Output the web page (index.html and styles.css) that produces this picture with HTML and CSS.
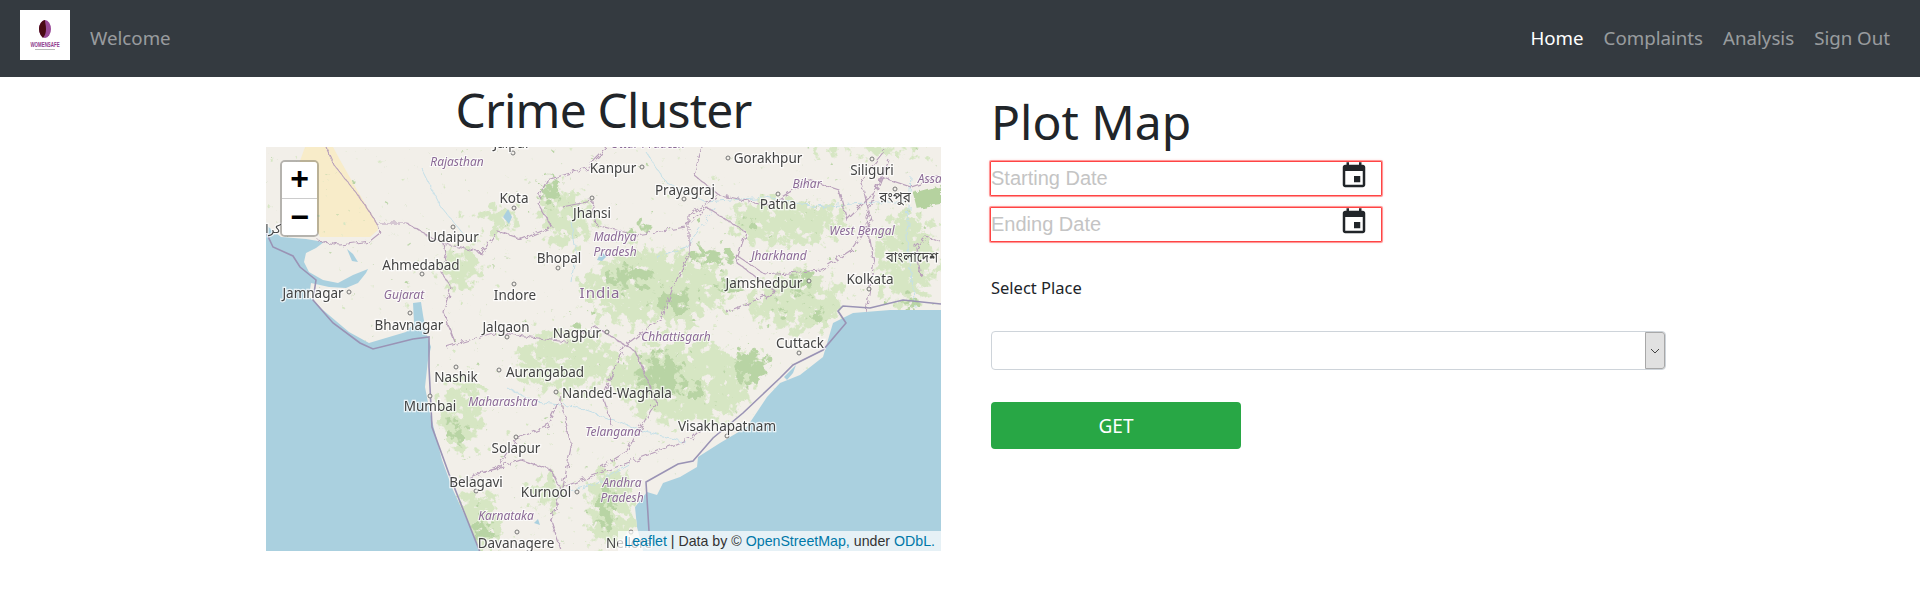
FILE: index.html
```html
<!DOCTYPE html>
<html>
  <head>
    <title>Crime Cluster</title>
    <meta charset="utf-8" />
    <link rel="stylesheet" href="styles.css">
  </head>
  <body>
    <nav class="navbar">
      <div class="brand">
        <div class="logo">
          <svg width="50" height="50" viewBox="0 0 50 50">
            <ellipse cx="25" cy="19" rx="6" ry="9" fill="#9a4a98" />
            <path d="M25 10c-4 1-6 5-6 9s2 7 4 9c2-3 3-5 3-9s-1-6-1-9z" fill="#4a0a14" />
            <text class="logo-text" transform="translate(25 37) scale(0.68 1)">WOMENSAFE</text>
            <rect x="15" y="39" width="20" height="1" fill="#bbb" />
          </svg>
        </div>
        <a class="nav-link" href="#">Welcome</a>
      </div>
      <div class="nav-menu">
        <a class="nav-link active" href="#">Home</a>
        <a class="nav-link" href="#">Complaints</a>
        <a class="nav-link" href="#">Analysis</a>
        <a class="nav-link" href="#">Sign Out</a>
      </div>
    </nav>

    <div class="content">
      <div class="map-col">
        <h1 class="map-title">Crime Cluster</h1>
        <div class="map">
          <svg class="map-tiles" width="675" height="404" viewBox="0 0 675 404">
            <defs>
              <clipPath id="landClip">
                <path d="M0 0H675V163L624 163 587 166 567 176 562 193 557 210 534 228 514 236 501 250 481 280 454 296 432 310 431 320 414 330 397 336 391 348 381 345 369 360 371 380 377 404H214L201 373 187 343 176 313 164 266 159 240 162 213 165 200 160 185 157 168 155 155 147 156 148 176 140 185 103 196 83 185 57 163 43 150 45 136 63 140 80 141 92 136 100 126 102 122 87 128 72 136 57 133 43 125 38 115 40 106 50 101 58 95 40 92 15 90 0 78Z" />
              </clipPath>
              <filter id="forestPale" filterUnits="userSpaceOnUse" x="0" y="0" width="675" height="404" color-interpolation-filters="sRGB">
                <feGaussianBlur in="SourceAlpha" stdDeviation="9" result="density" />
                <feTurbulence type="fractalNoise" baseFrequency="0.11" numOctaves="4" seed="3" />
                <feColorMatrix type="matrix" values="0 0 0 0 0  0 0 0 0 0  0 0 0 0 0  1 0 0 0 0" result="noise" />
                <feComposite in="noise" in2="density" operator="arithmetic" k1="0" k2="1" k3="0.5" k4="0" />
                <feComponentTransfer result="mask">
                  <feFuncA type="linear" slope="10" intercept="-7.7" />
                </feComponentTransfer>
                <feFlood flood-color="#d6e6c3" />
                <feComposite in2="mask" operator="in" />
                <feGaussianBlur stdDeviation="0.5" />
              </filter>
              <filter id="forestDeep" filterUnits="userSpaceOnUse" x="0" y="0" width="675" height="404" color-interpolation-filters="sRGB">
                <feGaussianBlur in="SourceAlpha" stdDeviation="6" result="density" />
                <feTurbulence type="fractalNoise" baseFrequency="0.13" numOctaves="4" seed="11" />
                <feColorMatrix type="matrix" values="0 0 0 0 0  0 0 0 0 0  0 0 0 0 0  1 0 0 0 0" result="noise" />
                <feComposite in="noise" in2="density" operator="arithmetic" k1="0" k2="1" k3="0.5" k4="0" />
                <feComponentTransfer result="mask">
                  <feFuncA type="linear" slope="10" intercept="-7.9" />
                </feComponentTransfer>
                <feFlood flood-color="#b8d4a4" />
                <feComposite in2="mask" operator="in" />
                <feGaussianBlur stdDeviation="0.5" />
              </filter>
              <filter id="wobble" x="-5%" y="-5%" width="110%" height="110%">
                <feTurbulence type="fractalNoise" baseFrequency="0.16" numOctaves="3" seed="9" />
                <feDisplacementMap in="SourceGraphic" scale="7" />
              </filter>
            </defs>

            <rect width="675" height="404" class="water" />
            <path class="land" d="M0 0H675V163L624 163 587 166 567 176 562 193 557 210 534 228 514 236 501 250 481 280 454 296 432 310 431 320 414 330 397 336 391 348 381 345 369 360 371 380 377 404H214L201 373 187 343 176 313 164 266 159 240 162 213 165 200 160 185 157 168 155 155 147 156 148 176 140 185 103 196 83 185 57 163 43 150 45 136 63 140 80 141 92 136 100 126 102 122 87 128 72 136 57 133 43 125 38 115 40 106 50 101 58 95 40 92 15 90 0 78Z" />
            <path class="desert" d="M39 0H67L74 13 91 43 111 76 112 83 104 90 54 90 40 60 30 25Z" />

            <g clip-path="url(#landClip)">
              <g filter="url(#forestPale)">
                <ellipse cx="232" cy="72" rx="18" ry="18" />
                <ellipse cx="195" cy="120" rx="26" ry="24" />
                <ellipse cx="300" cy="215" rx="55" ry="32" />
                <ellipse cx="195" cy="265" rx="24" ry="42" />
                <ellipse cx="390" cy="140" rx="75" ry="40" />
                <ellipse cx="420" cy="235" rx="70" ry="45" />
                <ellipse cx="520" cy="75" rx="65" ry="24" />
                <ellipse cx="530" cy="155" rx="50" ry="30" />
                <ellipse cx="212" cy="375" rx="24" ry="35" />
                <ellipse cx="345" cy="360" rx="26" ry="45" />
                <ellipse cx="640" cy="110" rx="32" ry="50" />
                <ellipse cx="610" cy="2" rx="70" ry="8" />
                <ellipse cx="300" cy="70" rx="30" ry="30" />
                <ellipse cx="280" cy="345" rx="16" ry="20" />
              </g>
              <g filter="url(#forestDeep)">
                <ellipse cx="285" cy="45" rx="12" ry="16" />
                <ellipse cx="372" cy="82" rx="20" ry="6" transform="rotate(-20 372 82)" />
                <ellipse cx="365" cy="130" rx="26" ry="12" />
                <ellipse cx="410" cy="155" rx="22" ry="12" />
                <ellipse cx="445" cy="110" rx="30" ry="9" />
                <ellipse cx="465" cy="140" rx="14" ry="9" />
                <ellipse cx="535" cy="135" rx="14" ry="14" />
                <ellipse cx="480" cy="75" rx="9" ry="7" />
                <ellipse cx="552" cy="168" rx="9" ry="11" />
                <ellipse cx="395" cy="230" rx="24" ry="25" />
                <ellipse cx="484" cy="220" rx="18" ry="20" />
                <ellipse cx="315" cy="180" rx="16" ry="5" />
                <ellipse cx="190" cy="285" rx="8" ry="18" />
                <ellipse cx="216" cy="382" rx="9" ry="18" />
                <ellipse cx="340" cy="360" rx="9" ry="30" />
                <ellipse cx="105" cy="187" rx="9" ry="4" />
                <ellipse cx="645" cy="155" rx="10" ry="10" />
                <ellipse cx="545" cy="62" rx="7" ry="5" />
                <ellipse cx="580" cy="65" rx="7" ry="6" />
                <ellipse cx="515" cy="160" rx="9" ry="8" />
                <ellipse cx="430" cy="245" rx="12" ry="10" />
              </g>
            </g>
            <path class="forest-solid" d="M647 46l28 -8v20l-24 4z" filter="url(#wobble)" />

            <g class="rivers" filter="url(#wobble)">
              <path d="M380 5l20 30 40 20 60 -5 50 10 60 -5 30 0" />
              <path d="M305 75l5 30 -5 30M155 20l20 40 25 30" />
              <path d="M645 30l-4 60 8 70M300 345l30 -8 35 -20" />
              <path d="M240 240l30 15 40 5 70 25 40 10" />
              <path d="M450 60l-30 40 -30 10" />
            </g>
            <g class="waterbody">
              <path d="M81 102l6 5 5 8 -6 -1z" />
              <path d="M237 70l5 -8 4 8 -3 7z" />
              <path d="M335 105l-4 8 5 1 5 -5z" />
              <path d="M518 230l12 -12 -3 8 -6 7z" />
              <path d="M272 372l-4 4 6 2z" />
            </g>

            <g class="borders" filter="url(#wobble)">
              <path d="M60 0l8 18 24 30 20 30 2 8 -10 8 -30 4 -22 -4" />
              <path d="M113 76l28 0 16 10 20 10 3 14 -5 15 10 15 -8 25 12 30" />
              <path d="M176 96l40 10 15 -22 25 8 30 -12 -15 -25 10 -22 40 -12 20 -20" />
              <path d="M296 60l30 -6 4 24 40 10 50 -8 20 -20 40 25 -10 30 40 30 -50 20" />
              <path d="M436 0l-8 28 25 20 -30 20 0 40 -16 32 -10 30 -40 30 -20 50 10 30" />
              <path d="M453 48l50 10 40 -25 30 10 8 30 30 -30 12 -30" />
              <path d="M470 108l30 20 55 -5 30 -20 20 -30 -10 -40 24 -30" />
              <path d="M180 200l50 -15 70 10 30 -15 40 25 20 50 -30 50 -25 15" />
              <path d="M295 250l-15 30 -30 12 -20 30 -20 5" />
              <path d="M295 250l10 50 -8 40 40 -15 40 -15 50 -20 10 -10" />
              <path d="M195 335l30 -12 30 -10 30 10 10 20 -10 30 10 30" />
              <path d="M600 165l8 -50 -8 -45 15 -40 30 10 30 -10" />
              <path d="M655 130l-5 -30 10 -10 15 5" />
            </g>
            <g class="coast-line">
              <path d="M0 85l7 15 20 9 7 11 16 13 -3 20 20 23 27 20 13 6 40 -10 16 -2 0 30 3 60 17 47 33 83" />
              <path d="M675 157l-38 -4 -33 8 -27 -2 -5 5 8 12 -23 27 -30 15 -13 13 -37 35 -30 25 -20 23 -15 3 -32 18 3 49" />
            </g>

            <g class="dots">
              <circle cx="247" cy="6" r="2" />
              <circle cx="376" cy="20" r="2" />
              <circle cx="248" cy="61" r="2" />
              <circle cx="326" cy="51" r="2" />
              <circle cx="187" cy="80" r="2" />
              <circle cx="156" cy="127" r="2" />
              <circle cx="292" cy="121" r="2" />
              <circle cx="248" cy="137" r="2" />
              <circle cx="83" cy="145" r="2" />
              <circle cx="144" cy="166" r="2" />
              <circle cx="462" cy="11" r="2" />
              <circle cx="418" cy="52" r="2" />
              <circle cx="512" cy="47" r="2" />
              <circle cx="606" cy="12" r="2" />
              <circle cx="629" cy="42" r="2" />
              <circle cx="603" cy="142" r="2" />
              <circle cx="543" cy="134" r="2" />
              <circle cx="241" cy="190" r="2" />
              <circle cx="341" cy="185" r="2" />
              <circle cx="190" cy="220" r="2" />
              <circle cx="233" cy="223" r="2" />
              <circle cx="290" cy="245" r="2" />
              <circle cx="164" cy="249" r="2" />
              <circle cx="250" cy="290" r="2" />
              <circle cx="210" cy="344" r="2" />
              <circle cx="311" cy="345" r="2" />
              <circle cx="251" cy="385" r="2" />
              <circle cx="533" cy="206" r="2" />
              <circle cx="461" cy="289" r="2" />
              <circle cx="365" cy="385" r="2" />
            </g>

            <g class="cities">
              <text x="246" y="1">Jaipur</text>
              <text x="347" y="26">Kanpur</text>
              <text x="248" y="56">Kota</text>
              <text x="326" y="71">Jhansi</text>
              <text x="187" y="95">Udaipur</text>
              <text x="155" y="123">Ahmedabad</text>
              <text x="293" y="116">Bhopal</text>
              <text x="249" y="153">Indore</text>
              <text x="47" y="151">Jamnagar</text>
              <text x="143" y="183">Bhavnagar</text>
              <text x="502" y="16">Gorakhpur</text>
              <text x="419" y="48">Prayagraj</text>
              <text x="512" y="62">Patna</text>
              <text x="606" y="28">Siliguri</text>
              <text x="604" y="137">Kolkata</text>
              <text x="498" y="141">Jamshedpur</text>
              <text x="240" y="185">Jalgaon</text>
              <text x="311" y="191">Nagpur</text>
              <text x="190" y="235">Nashik</text>
              <text x="279" y="230">Aurangabad</text>
              <text x="351" y="251">Nanded-Waghala</text>
              <text x="164" y="264">Mumbai</text>
              <text x="250" y="306">Solapur</text>
              <text x="210" y="340">Belagavi</text>
              <text x="280" y="350">Kurnool</text>
              <text x="250" y="401">Davanagere</text>
              <text x="534" y="201">Cuttack</text>
              <text x="461" y="284">Visakhapatnam</text>
              <text x="363" y="401">Nellore</text>
              <text x="629" y="55">রংপুর</text>
              <text x="646" y="115">বাংলাদেশ</text>
              <text x="7" y="86" class="urdu">کرا</text>
            </g>
            <g class="states">
              <text x="191" y="19">Rajasthan</text>
              <text x="382" y="1">Uttar Pradesh</text>
              <text x="349" y="94">Madhya</text>
              <text x="349" y="109">Pradesh</text>
              <text x="138" y="152">Gujarat</text>
              <text x="541" y="41">Bihar</text>
              <text x="669" y="36">Assam</text>
              <text x="596" y="88">West Bengal</text>
              <text x="513" y="113">Jharkhand</text>
              <text x="410" y="194">Chhattisgarh</text>
              <text x="237" y="259">Maharashtra</text>
              <text x="347" y="289">Telangana</text>
              <text x="356" y="340">Andhra</text>
              <text x="356" y="355">Pradesh</text>
              <text x="240" y="373">Karnataka</text>
              <text x="334" y="151" class="country">India</text>
            </g>
          </svg>

          <div class="zoom-control">
            <a class="zoom-btn" href="#">+</a>
            <a class="zoom-btn" href="#">&minus;</a>
          </div>
          <div class="attribution">
            <a href="#">Leaflet</a> | Data by &copy; <a href="#">OpenStreetMap,</a> under <a href="#">ODbL.</a>
          </div>
        </div>
      </div>

      <div class="form-col">
        <h1 class="form-title">Plot Map</h1>
        <div class="date-field">
          <input class="date-input" type="text" placeholder="Starting Date" />
          <svg class="cal-icon" width="30" height="30" viewBox="0 0 24 24">
            <path d="M17 12h-5v5h5v-5zM16 1v2H8V1H6v2H5c-1.11 0-1.99.9-1.99 2L3 19c0 1.1.89 2 2 2h14c1.1 0 2-.9 2-2V5c0-1.1-.9-2-2-2h-1V1h-2zm3 18H5V8h14v11z" />
          </svg>
        </div>
        <div class="date-field">
          <input class="date-input" type="text" placeholder="Ending Date" />
          <svg class="cal-icon" width="30" height="30" viewBox="0 0 24 24">
            <path d="M17 12h-5v5h5v-5zM16 1v2H8V1H6v2H5c-1.11 0-1.99.9-1.99 2L3 19c0 1.1.89 2 2 2h14c1.1 0 2-.9 2-2V5c0-1.1-.9-2-2-2h-1V1h-2zm3 18H5V8h14v11z" />
          </svg>
        </div>
        <label class="place-label">Select Place</label>
        <div class="place-select">
          <select class="place-input"></select>
          <span class="select-arrow">
            <svg width="10" height="6" viewBox="0 0 10 6"><path d="M1 1l4 4 4-4" /></svg>
          </span>
        </div>
        <button class="btn-get">GET</button>
      </div>
    </div>
  </body>
</html>
```

FILE: styles.css
```css
body {
  font-family: "Noto Sans", "Open Sans", sans-serif;
  font-size: 16px;
  margin: 0;
  padding: 0;
  color: #212529;
  background: #fff;
}

a {
  text-decoration: none;
}

/* Navbar */

.navbar {
  display: flex;
  justify-content: space-between;
  align-items: center;
  height: 77px;
  box-sizing: border-box;
  padding: 0 30px 3px 20px;
  background: #343a40;
}

.brand {
  display: flex;
  align-items: center;
  gap: 20px;
}

.logo {
  width: 50px;
  height: 50px;
  margin-bottom: 4px;
  background: #fff;
}

.logo svg {
  display: block;
}

.logo-text {
  font-family: "Liberation Sans", sans-serif;
  font-size: 6.5px;
  font-weight: 700;
  text-anchor: middle;
  fill: #8e3a8c;
}

.nav-menu {
  display: flex;
  gap: 20px;
}

.nav-link {
  font-size: 18.7px;
  color: rgba(255, 255, 255, 0.5);
}

.nav-link.active {
  color: #fff;
}

/* Layout */

.content {
  display: flex;
  gap: 50px;
  padding-left: 266px;
}

.map-col {
  width: 675px;
}

.form-col {
  width: 675px;
  display: flex;
  flex-direction: column;
  align-items: flex-start;
}

h1 {
  margin: 0;
  font-weight: 400;
  font-size: 48px;
  line-height: 70px;
}

.map-title {
  height: 70px;
  line-height: 66px;
  letter-spacing: -0.8px;
  text-align: center;
}

/* Map */

.map {
  position: relative;
  width: 675px;
  height: 404px;
  overflow: hidden;
}

.map-tiles {
  display: block;
  filter: blur(0.45px);
}

.water {
  fill: #aad0df;
}

.land {
  fill: #f2efe9;
}

.desert {
  fill: #f8ecc9;
}

.forest-solid {
  fill: #b5d29f;
}

.rivers {
  fill: none;
  stroke: #c3dfe8;
  stroke-width: 1;
}

.waterbody {
  fill: #aad0df;
}

.borders {
  fill: none;
  stroke: #b9a0bb;
  stroke-width: 1.2;
}

.coast-line {
  fill: none;
  stroke: #9a93b5;
  stroke-width: 1.6;
}

.dots circle {
  fill: #f2efe9;
  stroke: #777;
  stroke-width: 1;
}

.cities text {
  font-family: "Noto Sans", "Noto Sans Bengali", "DejaVu Sans", sans-serif;
  font-size: 13.5px;
  text-anchor: middle;
  fill: #444;
  stroke: rgba(255, 255, 255, 0.75);
  stroke-width: 2.5px;
  paint-order: stroke;
}

.cities .urdu {
  font-family: "DejaVu Sans", sans-serif;
  font-size: 12px;
}

.states text {
  font-family: "Noto Sans", sans-serif;
  font-size: 12px;
  font-style: italic;
  text-anchor: middle;
  fill: #8b6a96;
  stroke: rgba(255, 255, 255, 0.7);
  stroke-width: 2px;
  paint-order: stroke;
}

.states .country {
  font-size: 15px;
  font-style: normal;
  letter-spacing: 1px;
}

.zoom-control {
  position: absolute;
  top: 13px;
  left: 14px;
  width: 35px;
  border: 2px solid rgba(0, 0, 0, 0.25);
  border-radius: 5px;
  background-clip: padding-box;
}

.zoom-btn {
  display: block;
  height: 36px;
  font-family: "Liberation Mono", monospace;
  font-size: 32px;
  font-weight: 700;
  line-height: 38px;
  text-align: center;
  color: #000;
  background: #fff;
}

.zoom-btn:first-child {
  border-bottom: 1px solid #ccc;
  border-radius: 3px 3px 0 0;
}

.zoom-btn:last-child {
  line-height: 42px;
  border-radius: 0 0 3px 3px;
}

.attribution {
  position: absolute;
  right: 0;
  bottom: 0;
  height: 20px;
  padding: 0 6px;
  font-family: "Liberation Sans", sans-serif;
  font-size: 14.2px;
  line-height: 20px;
  color: #333;
  background: rgba(255, 255, 255, 0.7);
}

.attribution a {
  color: #0078a8;
}

/* Form */

.form-title {
  margin-top: 10px;
  margin-bottom: 4px;
}

.date-field {
  position: relative;
  margin-bottom: 11px;
}

.date-input {
  display: block;
  width: 392px;
  height: 35px;
  box-sizing: border-box;
  margin-left: -1px;
  padding: 0;
  font-family: "Liberation Sans", sans-serif;
  font-size: 20px;
  background: #fff;
  border: 1px solid #f44;
  border-radius: 1px;
  box-shadow: 0 0 0 1px rgba(255, 90, 90, 0.55), 0 0 3px rgba(255, 60, 60, 0.4);
  outline: none;
}

.date-input::placeholder {
  color: #c4c4c4;
  opacity: 1;
}

.cal-icon {
  position: absolute;
  top: 0;
  right: 13px;
  fill: #212529;
}

.place-label {
  margin-top: 23px;
  font-size: 16.5px;
  line-height: 24px;
}

.place-select {
  position: relative;
  width: 675px;
  height: 39px;
  margin-top: 31px;
}

.place-input {
  display: block;
  width: 100%;
  height: 100%;
  appearance: none;
  background: #fff;
  border: 1px solid #ced4da;
  border-radius: 4px;
}

.select-arrow {
  position: absolute;
  top: 1px;
  right: 1px;
  bottom: 1px;
  width: 20px;
  display: flex;
  align-items: center;
  justify-content: center;
  box-sizing: border-box;
  background: #e1e1e1;
  border: 1px solid #a8a8a8;
  border-radius: 0 3px 3px 0;
}

.select-arrow path {
  fill: none;
  stroke: #444;
}

.btn-get {
  width: 250px;
  height: 47px;
  margin-top: 32px;
  padding-top: 2px;
  font-family: "Noto Sans", sans-serif;
  font-size: 19px;
  color: #fff;
  background: #28a745;
  border: none;
  border-radius: 4px;
}
```
